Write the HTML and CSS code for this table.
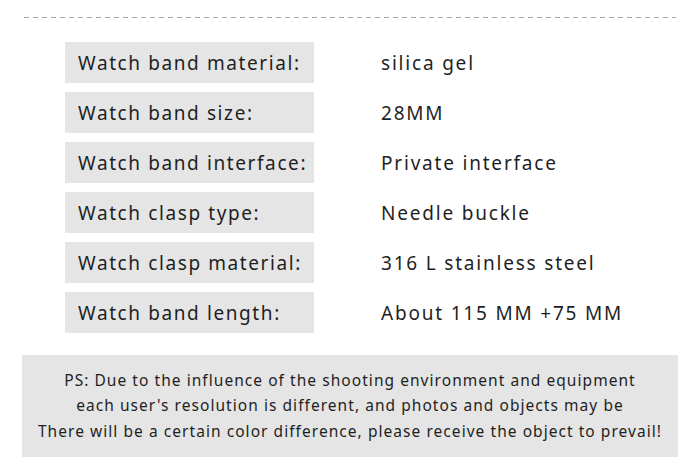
FILE: index.html
```html
<!DOCTYPE html>
<html>
<head>
<meta charset="utf-8">
<link rel="stylesheet" href="styles.css">
</head>
<body>
<div class="page">
  <div class="dash"></div>
  <div class="specs">
    <div class="label">Watch band material:</div><div class="value">silica gel</div>
    <div class="label">Watch band size:</div><div class="value">28MM</div>
    <div class="label">Watch band interface:</div><div class="value">Private interface</div>
    <div class="label">Watch clasp type:</div><div class="value">Needle buckle</div>
    <div class="label">Watch clasp material:</div><div class="value">316 L stainless steel</div>
    <div class="label">Watch band length:</div><div class="value">About 115 MM +75 MM</div>
  </div>
  <div class="note">
    <p>PS: Due to the influence of the shooting environment and equipment</p>
    <p>each user's resolution is different, and photos and objects may be</p>
    <p>There will be a certain color difference, please receive the object to prevail!</p>
  </div>
</div>
</body>
</html>
```
FILE: styles.css
```css
html, body {
  margin: 0;
  padding: 0;
  background: #ffffff;
}
body {
  font-family: "Noto Sans", "Noto Sans CJK SC", sans-serif;
  color: #1f1f1f;
}
.page {
  width: 700px;
  height: 469px;
  padding-top: 17px;
  box-sizing: border-box;
}
.dash {
  margin-left: 24px;
  width: 652px;
  height: 1px;
  background: repeating-linear-gradient(to right, #a8a8a8 0 5px, transparent 5px 9px);
}
.specs {
  display: grid;
  grid-template-columns: 249px auto;
  column-gap: 67px;
  row-gap: 9px;
  margin: 24px 0 0 65px;
}
.label {
  height: 41px;
  background: #e5e5e5;
  display: flex;
  align-items: center;
  padding-left: 13px;
  font-size: 19px;
  letter-spacing: 1.6px;
}
.value {
  display: flex;
  align-items: center;
  font-size: 19px;
  letter-spacing: 1.8px;
}
.note {
  margin: 22px 22px 0 22px;
  height: 102px;
  background: #e5e5e5;
  display: flex;
  flex-direction: column;
  justify-content: center;
  align-items: center;
  font-size: 15.5px;
  letter-spacing: 1.05px;
}
.note p {
  margin: 0;
  line-height: 25.5px;
}
```
